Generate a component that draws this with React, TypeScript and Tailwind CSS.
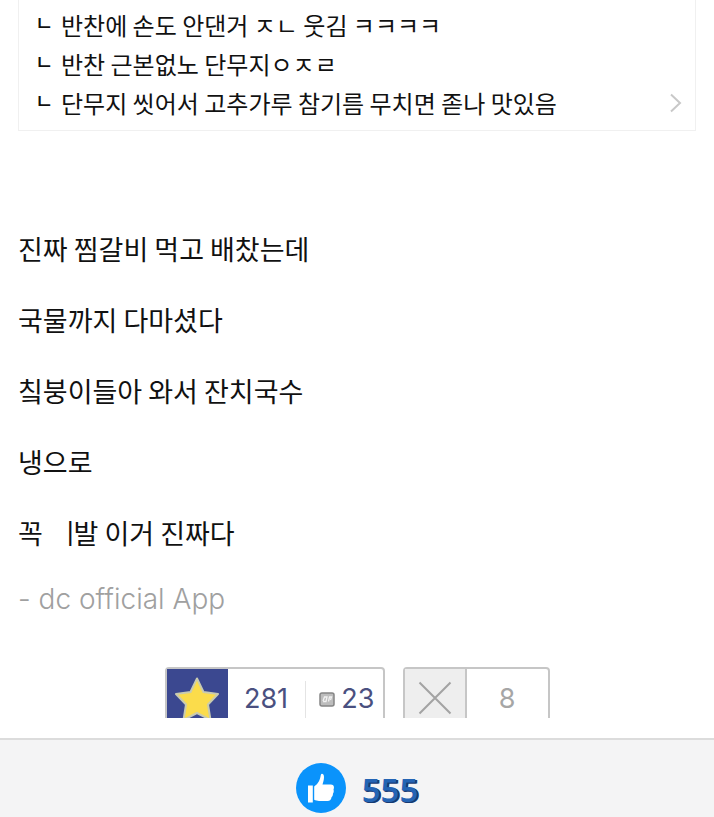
import React from "react";

const replies = [
  "반찬에 손도 안댄거 ㅈㄴ 웃김 ㅋㅋㅋㅋ",
  "반찬 근본없노 단무지ㅇㅈㄹ",
  "단무지 씻어서 고추가루 참기름 무치면 졷나 맛있음",
];

const lines = ["진짜 찜갈비 먹고 배찼는데", "국물까지 다마셨다", "칰붕이들아 와서 잔치국수", "냉으로"];

function ReplyBox() {
  return (
    <section className="flex items-end justify-between border border-t-0 border-[#f0f0f0] pt-[5px] pb-2 pl-4 pr-3">
      <ul className="text-2xl leading-[39px]">
        {replies.map((reply) => (
          <li key={reply} className="flex">
            <span className="w-[26px] shrink-0 text-xl font-medium leading-[35px]">ㄴ</span>
            <span>{reply}</span>
          </li>
        ))}
      </ul>
      <a href="#replies" aria-label="더보기" className="flex h-[39px] items-center">
        <svg width="16" height="20" viewBox="0 0 16 20" fill="none" stroke="#c8c8c8" strokeWidth="2">
          <path d="M4 1.500 13 10 4 18.500" />
        </svg>
      </a>
    </section>
  );
}

function VoteBar() {
  return (
    <div className="flex h-[51px] justify-center gap-[18px] overflow-hidden font-[Inter,sans-serif] text-[27px]">
      <button className="flex h-16 w-[220px] rounded-sm border-2 border-[#c6c6c6]">
        <span className="flex h-full w-[61px] justify-center bg-[#3b4890] pt-2">
          <svg width="44" height="44" viewBox="0 0 44 44">
            <path
              d="M22 1.500 28.500 15 43 17 33 27.500 35.500 43 22 36 8.500 43 11 27.500 1 17 15.500 15Z"
              fill="#fbdc4b"
              stroke="#c9cbb0"
              strokeWidth="2"
              strokeLinejoin="round"
            />
          </svg>
        </span>
        <span className="flex h-[60px] flex-1 items-center justify-center text-[#4a5080]">281</span>
        <span className="mt-3 h-10 w-px bg-[#e4e4e4]" />
        <span className="flex h-[60px] w-[77px] items-center justify-end gap-1.5 pr-2 text-[#4a5080]">
          <svg width="16" height="15" viewBox="0 0 16 15">
            <rect x="1" y="1" width="14" height="13" rx="2" fill="#bdbdbd" stroke="#858585" strokeWidth="1.5" />
            <path d="M4 9 5.500 5H8L7 9.500H4M9.500 9.500 10.500 5H12.500L11.500 8" fill="none" stroke="#f2f2f2" strokeWidth="1.3" />
          </svg>
          23
        </span>
      </button>
      <button className="flex h-16 w-[147px] rounded-sm border-2 border-[#c6c6c6] text-[#a6a6a6]">
        <span className="flex h-full w-[62px] justify-center border-r-2 border-[#c6c6c6] bg-[#eeeeee] pt-3">
          <svg width="34" height="34" viewBox="0 0 34 34" stroke="#a3a3a3" strokeWidth="2">
            <path d="M1.500 1.500 32.500 32.500M32.500 1.500 1.500 32.500" />
          </svg>
        </span>
        <span className="flex h-[60px] flex-1 items-center justify-center">8</span>
      </button>
    </div>
  );
}

function LikeBar() {
  return (
    <footer className="mt-5 flex h-20 items-center justify-center gap-4 border-t-2 border-[#dcdcdc] bg-[#f4f4f5] pt-[18px]">
      <button aria-label="추천" className="flex size-[50px] items-center justify-center rounded-full bg-[#0a93fb]">
        <svg width="28" height="30" viewBox="0 0 28 30" fill="#fff">
          <path d="M1 12.500H5.800V29.500H1Z" />
          <path d="M7.200 13.500C11.500 10.500 13 7 13.800 2 14.200 0 17 0.500 17 4 17 7.500 16 9.500 15.500 11.500H24C27 11.500 27.500 14.500 26.500 16.500 27 18 26.800 19.500 26 20.500 26 22 25.500 23.500 24.500 24.300 24.300 26.500 23 28 20.500 28H12C10.500 28 8.500 27.500 7.200 26.800Z" />
        </svg>
      </button>
      <span className="pt-1 font-['Noto_Sans',sans-serif] text-[33px] font-semibold text-[#2464b4] [text-shadow:1px_1px_0_#163a72,2px_1px_0_#163a72]">
        555
      </span>
    </footer>
  );
}

export default function App() {
  return (
    <main className="bg-white font-['Noto_Sans_CJK_KR',sans-serif] text-[#111111]">
      <div className="px-[18px]">
        <ReplyBox />
        <article className="mt-[82px] text-[27px] leading-[71px]">
          {lines.map((line) => (
            <p key={line}>{line}</p>
          ))}
          <p>
            꼭&nbsp;&nbsp;&nbsp;&nbsp;<span className="align-text-top text-[22px] font-bold leading-[34px]">|</span>발 이거 진짜다
          </p>
          <p className="mb-[37px] font-[Inter,sans-serif] text-[28px] font-light leading-[62px] text-[#a0a0a0]">
            - dc official App
          </p>
        </article>
      </div>
      <VoteBar />
      <LikeBar />
    </main>
  );
}
